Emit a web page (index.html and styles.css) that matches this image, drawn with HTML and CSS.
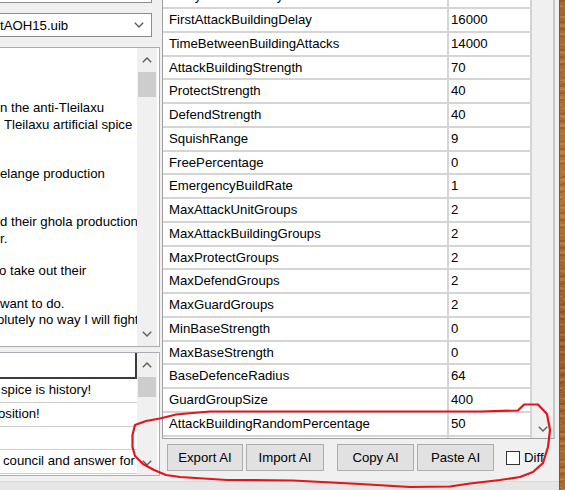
FILE: index.html
```html
<!DOCTYPE html>
<html lang="en">
<head>
<meta charset="utf-8">
<title>AI Editor</title>
<link rel="stylesheet" href="styles.css">
</head>
<body>
<div class="screen">
  <div class="window">
    <div class="main">
      <div class="left">
        <div class="edit"></div>
        <div class="combo">
          <span class="combo-text">tAOH15.uib</span>
          <svg class="chev" width="10" height="6" viewBox="0 0 10 6"><polyline points="0.8,0.8 5,5 9.2,0.8"/></svg>
        </div>
        <div class="memo">
          <div class="memo-text">
            <div class="ln"></div>
            <div class="ln"></div>
            <div class="ln"></div>
            <div class="ln">n the anti-Tleilaxu</div>
            <div class="ln in">Tleilaxu artificial spice</div>
            <div class="ln"></div>
            <div class="ln"></div>
            <div class="ln">elange production</div>
            <div class="ln"></div>
            <div class="ln"></div>
            <div class="ln">d their ghola production</div>
            <div class="ln">r.</div>
            <div class="ln"></div>
            <div class="ln cut">o take out their</div>
            <div class="ln"></div>
            <div class="ln">want to do.</div>
            <div class="ln cut2">olutely no way I will fight</div>
          </div>
          <div class="vscroll">
            <div class="sb-btn"><svg class="chev" width="10" height="6" viewBox="0 0 10 6"><polyline points="0.8,5.2 5,1 9.2,5.2"/></svg></div>
            <div class="sb-track"><div class="thumb memo-thumb"></div></div>
            <div class="sb-btn"><svg class="chev" width="10" height="6" viewBox="0 0 10 6"><polyline points="0.8,0.8 5,5 9.2,0.8"/></svg></div>
          </div>
        </div>
        <div class="list">
          <div class="list-body">
            <div class="list-head"></div>
            <div class="list-row">spice is history!</div>
            <div class="list-row cut">osition!</div>
            <div class="list-row"></div>
            <div class="list-row in">council and answer for</div>
          </div>
          <div class="vscroll">
            <div class="sb-btn"><svg class="chev" width="10" height="6" viewBox="0 0 10 6"><polyline points="0.8,5.2 5,1 9.2,5.2"/></svg></div>
            <div class="sb-track"><div class="thumb list-thumb"></div></div>
            <div class="sb-btn"><svg class="chev" width="10" height="6" viewBox="0 0 10 6"><polyline points="0.8,0.8 5,5 9.2,0.8"/></svg></div>
          </div>
        </div>
      </div>

      <div class="right">
        <div class="grid">
          <div class="grid-view">
            <div class="grid-rows">
              <div class="row"><div class="cell">CarryallFromInfinity</div><div class="cell val">1</div></div>
              <div class="row"><div class="cell">FirstAttackBuildingDelay</div><div class="cell val">16000</div></div>
              <div class="row"><div class="cell">TimeBetweenBuildingAttacks</div><div class="cell val">14000</div></div>
              <div class="row"><div class="cell">AttackBuildingStrength</div><div class="cell val">70</div></div>
              <div class="row"><div class="cell">ProtectStrength</div><div class="cell val">40</div></div>
              <div class="row"><div class="cell">DefendStrength</div><div class="cell val">40</div></div>
              <div class="row"><div class="cell">SquishRange</div><div class="cell val">9</div></div>
              <div class="row"><div class="cell">FreePercentage</div><div class="cell val">0</div></div>
              <div class="row"><div class="cell">EmergencyBuildRate</div><div class="cell val">1</div></div>
              <div class="row"><div class="cell">MaxAttackUnitGroups</div><div class="cell val">2</div></div>
              <div class="row"><div class="cell">MaxAttackBuildingGroups</div><div class="cell val">2</div></div>
              <div class="row"><div class="cell">MaxProtectGroups</div><div class="cell val">2</div></div>
              <div class="row"><div class="cell">MaxDefendGroups</div><div class="cell val">2</div></div>
              <div class="row"><div class="cell">MaxGuardGroups</div><div class="cell val">2</div></div>
              <div class="row"><div class="cell">MinBaseStrength</div><div class="cell val">0</div></div>
              <div class="row"><div class="cell">MaxBaseStrength</div><div class="cell val">0</div></div>
              <div class="row"><div class="cell">BaseDefenceRadius</div><div class="cell val">64</div></div>
              <div class="row"><div class="cell">GuardGroupSize</div><div class="cell val">400</div></div>
              <div class="row"><div class="cell">AttackBuildingRandomPercentage</div><div class="cell val">50</div></div>
              <div class="row"><div class="cell"></div><div class="cell val"></div></div>
            </div>
          </div>
          <div class="grid-sb">
            <div class="sb-btn grid-down"><svg class="chev" width="10" height="6" viewBox="0 0 10 6"><polyline points="0.8,0.8 5,5 9.2,0.8"/></svg></div>
          </div>
        </div>
        <div class="buttons">
          <button class="btn export">Export AI</button>
          <button class="btn import">Import AI</button>
          <button class="btn copy">Copy AI</button>
          <button class="btn paste">Paste AI</button>
          <span class="check"></span>
          <span class="check-label">Diff</span>
        </div>
      </div>
    </div>
    <div class="status"></div>
  </div>
  <div class="wallpaper"></div>

  <!-- hand-drawn highlight around the bottom rows and the action buttons -->
  <svg class="markup" width="565" height="490" viewBox="0 0 565 490">
    <polyline points="210,411.5 187,413.5 176,414.5 160,418.5 146,421 135,425 132.5,435 132.5,447 135,456 143,464 154,470 166,475 180,477 227,480 293,480.5 360,484 410,487 450,486.5 470,483.5 500,480 520,477 533,472 543,463 548,447 550,430 547,414 538,404.5 524,404.5 518,410.5 480,411.5 360,411.5 210,411.5"/>
  </svg>
</div>
</body>
</html>
```

FILE: styles.css
```css
* {
  box-sizing: border-box;
}

html,
body {
  margin: 0;
  padding: 0;
}

body {
  width: 565px;
  height: 490px;
  overflow: hidden;
  background: #f0f0f0;
  font-family: "Liberation Sans", Arial, sans-serif;
  font-size: 13.2px;
  color: #000;
}

.screen {
  position: relative;
  display: flex;
  width: 565px;
  height: 490px;
}

/* ---------- dialog window ---------- */
.window {
  width: 560px;
  display: flex;
  flex-direction: column;
  background: #f0f0f0;
  border-right: 1px solid #6d5a48;
}

.main {
  display: flex;
  height: 481px;
}

.status {
  flex: 1;
  background: #e6e6e6;
  border-top: 1px solid #d9d9d9;
}

.wallpaper {
  flex: 1;
  background:
    repeating-linear-gradient(172deg, rgba(0, 0, 0, 0.12) 0 2px, transparent 2px 7px),
    repeating-linear-gradient(8deg, rgba(255, 200, 120, 0.18) 0 3px, transparent 3px 9px),
    linear-gradient(180deg, #a9662c, #b9732f 40%, #9b5a26 70%, #b06b2d);
}

/* ---------- left column ---------- */
.left {
  width: 160px;
  display: flex;
  flex-direction: column;
}

.edit {
  width: 152px;
  height: 3px;
  background: #fff;
  border-right: 1px solid #8c8c8c;
  border-bottom: 1px solid #8c8c8c;
}

.combo {
  width: 152px;
  height: 24px;
  margin-top: 10px;
  background: #fff;
  border: 1px solid #8c8c8c;
  border-left: 0;
  display: flex;
  align-items: center;
  justify-content: space-between;
  padding-right: 7px;
  white-space: nowrap;
}

.chev {
  display: block;
}

.chev polyline {
  fill: none;
  stroke: #5f5f5f;
  stroke-width: 1.4;
}

.memo {
  width: 160px;
  height: 300px;
  margin-top: 10px;
  background: #fff;
  border: 1px solid #abadb3;
  border-left: 0;
  display: flex;
}

.memo-text {
  width: 137px;
  overflow: hidden;
  padding-top: 3.5px;
  white-space: nowrap;
}

.ln {
  height: 16.3px;
  line-height: 16.3px;
}

.ln.in {
  padding-left: 4px;
}

.ln.cut {
  margin-left: -1px;
}

.ln.cut2 {
  margin-left: -3px;
}

.vscroll {
  width: 20px;
  background: #f0f0f0;
  display: flex;
  flex-direction: column;
}

.sb-btn {
  height: 24px;
  display: flex;
  align-items: center;
  justify-content: center;
}

.sb-track {
  flex: 1;
}

.thumb {
  margin: 0 1px;
  background: #cdcdcd;
}

.memo-thumb {
  height: 25px;
}

.list-thumb {
  height: 20px;
}

.list {
  width: 160px;
  height: 124px;
  margin-top: 5px;
  background: #fff;
  border: 1px solid #abadb3;
  border-left: 0;
  display: flex;
}

.list-body {
  width: 137px;
  overflow: hidden;
}

.list-head {
  height: 26px;
  background: #fff;
  border-right: 2px solid #3c3c3c;
  border-bottom: 2px solid #3c3c3c;
}

.list-row {
  height: 23.75px;
  line-height: 22.75px;
  border-bottom: 1px solid #d0d0d0;
  padding-left: 1px;
  white-space: nowrap;
  overflow: hidden;
}

.list-row.cut {
  padding-left: 0;
  text-indent: -2px;
}

.list-row.in {
  padding-left: 3px;
}

/* ---------- right column: property grid ---------- */
.right {
  width: 393px;
  margin-left: 2px;
  display: flex;
  flex-direction: column;
}

.grid {
  height: 439px;
  display: flex;
  background: #fff;
  border-left: 1px solid #a0a0a0;
  border-right: 2px solid #c8c8c8;
  border-bottom: 1px solid #a0a0a0;
}

.grid-view {
  width: 369px;
  overflow: hidden;
}

.grid-rows {
  margin-top: -14.75px;
}

.row {
  display: grid;
  grid-template-columns: 286px 83px;
  height: 23.75px;
}

.cell {
  border-right: 2px solid #d5d5d5;
  border-bottom: 2px solid #d5d5d5;
  padding-left: 6px;
  line-height: 21.75px;
  white-space: nowrap;
  overflow: hidden;
}

.cell.val {
  padding-left: 2px;
}

.grid-sb {
  width: 21px;
  background: #f0f0f0;
  display: flex;
  flex-direction: column;
  justify-content: flex-end;
}

.grid-sb .grid-down {
  height: 18px;
  padding-left: 1px;
}

/* ---------- action buttons ---------- */
.buttons {
  display: flex;
  align-items: center;
  height: 27px;
  margin: 5px 0 0 5px;
}

.btn {
  height: 27px;
  padding: 0;
  background: #e1e1e1;
  border: 1px solid #adadad;
  font: inherit;
  color: #000;
  display: flex;
  align-items: center;
  justify-content: center;
}

.export {
  width: 76px;
}

.import {
  width: 78px;
  margin-left: 3px;
}

.copy {
  width: 77px;
  margin-left: 13px;
}

.paste {
  width: 77px;
  margin-left: 3px;
}

.check {
  width: 14px;
  height: 14px;
  margin-left: 12px;
  background: #fff;
  border: 1px solid #333;
}

.check-label {
  margin-left: 4px;
  white-space: nowrap;
}

/* ---------- red highlight ---------- */
.markup {
  position: absolute;
  left: 0;
  top: 0;
  pointer-events: none;
}

.markup polyline {
  fill: none;
  stroke: #e3141c;
  stroke-width: 2.2;
  stroke-linejoin: round;
  stroke-linecap: round;
}
```
